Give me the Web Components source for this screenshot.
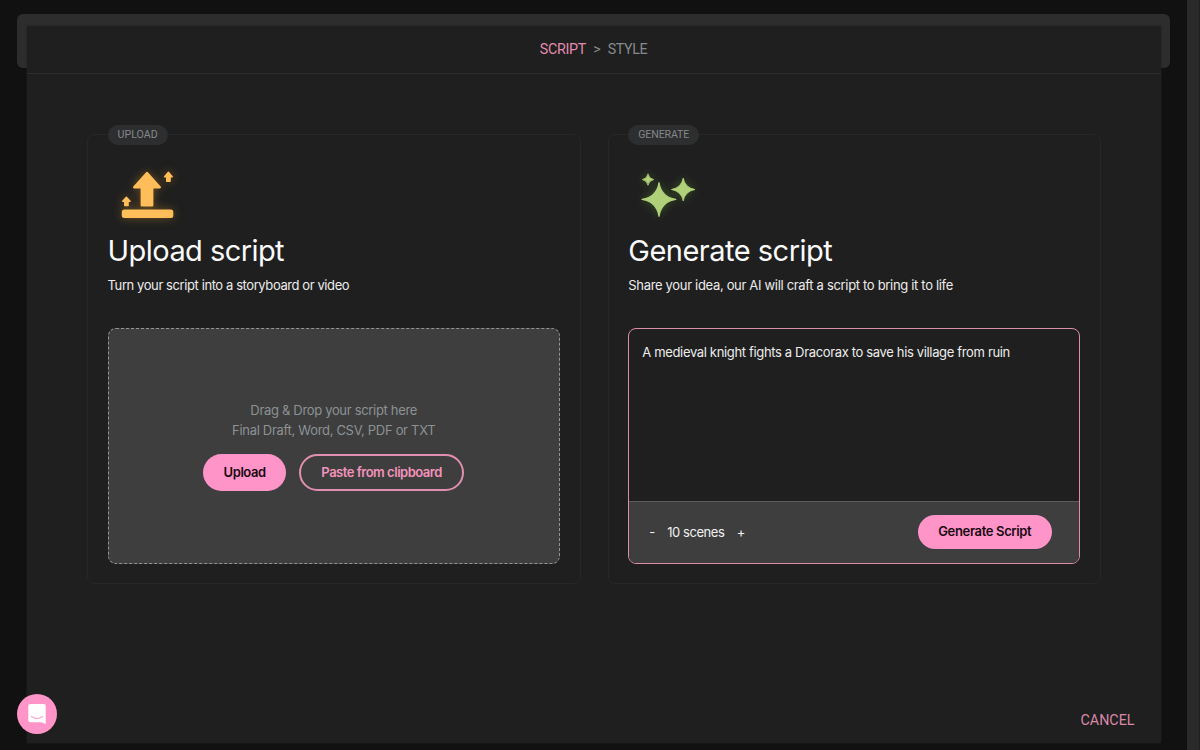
<!DOCTYPE html>
<html lang="en">
<head>
<meta charset="utf-8">
<title>Script</title>
<style>
html,body{margin:0;height:100%;background:#111;overflow:hidden}
body{font-family:Inter,"Liberation Sans",sans-serif;color:#f2f2f2}
</style>
</head>
<body>
<script-studio></script-studio>
<script>
const define = (name, html, ready) => {
  const t = document.createElement('template');
  t.innerHTML = html;
  customElements.define(name, class extends HTMLElement {
    constructor() {
      super();
      this.attachShadow({ mode: 'open' }).append(t.content.cloneNode(true));
    }
    connectedCallback() { if (ready) ready(this); }
  });
};

/* A single line of type tracked to a given measure. */
define('tracked-text', `<style>
:host{display:block;white-space:nowrap;flex:none}
span{display:inline-block}
</style><span><slot></slot></span>`, el => {
  const span = el.shadowRoot.querySelector('span');
  const n = el.textContent.length;
  const fit = () => {
    span.style.letterSpacing = '0px';
    span.style.marginRight = '0px';
    const w = span.getBoundingClientRect().width;
    const d = n > 1 ? (parseFloat(el.getAttribute('measure')) - w) / (n - 1) : 0;
    span.style.letterSpacing = d + 'px';
    span.style.marginRight = -d + 'px';
  };
  requestAnimationFrame(fit);
  fit();
});

define('pill-button', `<style>
:host{display:flex;align-items:center;justify-content:center;box-sizing:border-box;height:37px;border-radius:19px;background:#ff94c8;color:#180a12;font-size:13px;font-weight:600;line-height:20px;padding-bottom:1px;flex:none}
:host([outline]){background:none;border:2px solid #e08fb0;color:#f293ba}
</style><slot></slot>`);

define('option-card', `<style>
:host{display:block;box-sizing:border-box;height:450px;border:1px solid #272727;border-radius:7px;padding:0 20px 0 19.5px;position:relative}
.tag{position:absolute;top:-10px;left:19.5px;height:20px;box-sizing:border-box;padding:0 10px;border-radius:10px;background:#2d2e30;color:#858789;font-size:10.6px;line-height:20px;font-family:Roboto,sans-serif}
.icon{height:66px;padding-top:25px;width:100px}
.title{font-size:29px;line-height:36px;font-weight:400;color:#fafafa;margin-top:7px}
.sub{font-size:13px;line-height:20px;margin-top:6px;color:#ececec}
.body{margin-top:33px}
</style>
<div class="tag"><slot name="tag"></slot></div>
<div class="icon"><slot name="icon"></slot></div>
<div class="title"><slot name="title"></slot></div>
<div class="sub"><slot name="sub"></slot></div>
<div class="body"><slot></slot></div>`);

define('upload-icon', `<style>:host{display:block}svg{display:block;overflow:visible;filter:drop-shadow(0 0 5px rgba(255,170,40,.36))}</style>
<svg width="80" height="66" viewBox="108 160 80 66" fill="#ffbe59" stroke="#ffbe59" stroke-linejoin="round">
<path stroke-width="2.4" d="M147 173 L159.8 187.2 H152.2 V205.3 H141.8 V187.2 H134.2Z"/>
<path stroke-width="1.4" d="M168.4 172.3 L172.2 176.7 H170.1 V181.2 H166.7 V176.7 H164.6Z"/>
<path stroke-width="1.4" d="M126.4 197.2 L130.1 201.3 H128.1 V205.6 H124.7 V201.3 H122.7Z"/>
<rect x="121.8" y="209.5" width="51.5" height="8.5" rx="2.5" stroke="none"/></svg>`);

define('sparkle-icon', `<style>:host{display:block}svg{display:block;overflow:visible;filter:drop-shadow(0 0 5px rgba(130,220,60,.3))}</style>
<svg width="80" height="66" viewBox="628 160 80 66" fill="#b0d07a" stroke="#b0d07a" stroke-width=".8" stroke-linejoin="round">
<path d="M659 182.7 Q661.2 197.2 675.8 199.4 Q661.2 201.7 659 216.4 Q656.8 201.7 642 199.4 Q656.8 197.2 659 182.7Z" stroke-width="1.2"/>
<path d="M683.2 178 Q684.9 187.7 695 189.5 Q684.9 191.3 683.2 201 Q681.5 191.3 671.4 189.5 Q681.5 187.7 683.2 178Z"/>
<path d="M648 173.8 Q648.9 178.7 653.7 179.6 Q648.9 180.5 648 185.3 Q647.1 180.5 642.4 179.6 Q647.1 178.7 648 173.8Z"/></svg>`);

define('drop-zone', `<style>
:host{display:flex;flex-direction:column;align-items:center;box-sizing:border-box;height:235.5px;border:1px dashed #949494;border-radius:8px;background:#3e3e3e;padding-top:71px;color:#8c9294;font-size:13px;line-height:20px}
.row{display:flex;gap:13px;margin-top:14px}
.a{width:83px}.b{width:165px}
</style>
<tracked-text measure="167">Drag &amp; Drop your script here</tracked-text>
<tracked-text measure="203.5">Final Draft, Word, CSV, PDF or TXT</tracked-text>
<div class="row"><pill-button class="a"><tracked-text measure="42.5">Upload</tracked-text></pill-button>
<pill-button class="b" outline><tracked-text measure="121">Paste from clipboard</tracked-text></pill-button></div>`);

define('prompt-box', `<style>
:host{display:flex;flex-direction:column;box-sizing:border-box;height:235.5px;border:1px solid #dc8dab;border-radius:8px;overflow:hidden;font-size:13px;line-height:20px}
.text{flex:1;padding:13px 13px 0;color:#ededed}
.bar{box-sizing:border-box;height:62px;border-top:1px solid #5b5b5b;background:#3e3e3e;display:flex;align-items:center;padding:0 27px 1px 20px}
.n{margin:0 12px 0 12px}
pill-button{margin-left:auto;width:134px;height:34px}
</style>
<div class="text"><tracked-text measure="368">A medieval knight fights a Dracorax to save his village from ruin</tracked-text></div>
<div class="bar"><tracked-text measure="5">-</tracked-text><tracked-text class="n" measure="57.5">10 scenes</tracked-text><span>+</span>
<pill-button><tracked-text measure="93.5">Generate Script</tracked-text></pill-button></div>`);

define('step-header', `<style>
:host{display:flex;box-sizing:border-box;height:48px;border-bottom:1px solid #2d2d2d;justify-content:center;align-items:center;font:14.3px/20px Roboto,sans-serif;color:#858a8d;gap:7px;padding-bottom:1px}
.on{color:#e18baf}
</style><tracked-text class="on" measure="46.5">SCRIPT</tracked-text><span>&gt;</span><tracked-text measure="40">STYLE</tracked-text>`);

define('chat-launcher', `<style>
:host{display:block;width:40px;height:40px;border-radius:50%;background:#ff94c8}
svg{display:block}</style>
<svg width="40" height="40" viewBox="0 0 40 40"><path d="M13.3 10h13.4a2 2 0 0 1 2 2v18l-4.3-1.7H13.3a2 2 0 0 1-2-2V12a2 2 0 0 1 2-2Z" fill="#fff"/><path d="M14.5 22.6q5.5 4 11 0" fill="none" stroke="#f5a3cb" stroke-width="1.2" stroke-linecap="round"/></svg>`);

define('script-studio', `<style>
:host{display:grid;grid-template-columns:1fr 13px;height:750px;position:relative}
.back{position:absolute;left:17px;top:14px;width:1153px;height:54px;box-sizing:border-box;border-radius:6px;background:#2d2d2d}
.panel{position:relative;margin:26px 26px 7px 26.5px;background:#1f1f1f;box-shadow:0 0 2px #222;display:flex;flex-direction:column}
.cards{display:grid;grid-template-columns:494px 493.2px;gap:26.7px;padding:60px 0 0 60.6px}
.foot{margin-top:auto;padding:0 26.5px 13px;display:flex;justify-content:flex-end;font:14.3px/20px Roboto,sans-serif;color:#d989a8}
.scroll{background:#2a2a2a;border-right:1px solid #202020}
chat-launcher{position:absolute;left:16.5px;top:693.5px}
</style>
<div class="back"></div>
<div class="panel"><step-header></step-header>
<div class="cards">
<option-card><tracked-text slot="tag" measure="40">UPLOAD</tracked-text><upload-icon slot="icon"></upload-icon><tracked-text slot="title" measure="177">Upload script</tracked-text><tracked-text slot="sub" measure="242">Turn your script into a storyboard or video</tracked-text><drop-zone></drop-zone></option-card>
<option-card><tracked-text slot="tag" measure="51">GENERATE</tracked-text><sparkle-icon slot="icon"></sparkle-icon><tracked-text slot="title" measure="204.5">Generate script</tracked-text><tracked-text slot="sub" measure="325">Share your idea, our AI will craft a script to bring it to life</tracked-text><prompt-box></prompt-box></option-card>
</div>
<div class="foot"><tracked-text measure="54">CANCEL</tracked-text></div></div>
<div class="scroll"></div>
<chat-launcher></chat-launcher>`);
</script>
</body>
</html>
